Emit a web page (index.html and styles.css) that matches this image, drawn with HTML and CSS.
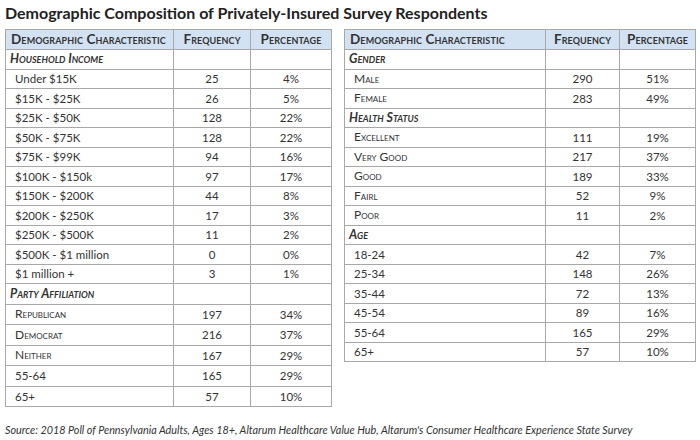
FILE: index.html
```html
<!DOCTYPE html>
<html lang="en">
<head>
<meta charset="UTF-8" />
<title>Demographic Composition of Privately-Insured Survey Respondents</title>
<link rel="stylesheet" href="styles.css">
</head>
<body>
  <h1>Demographic Composition of Privately-Insured Survey Respondents</h1>

  <div class="tables">
    <!-- Left: income and party -->
    <table class="demo left">
      <colgroup><col class="c1"><col class="c2"><col class="c3"></colgroup>
      <thead>
        <tr><th>Demographic Characteristic</th><th>Frequency</th><th>Percentage</th></tr>
      </thead>
      <tbody>
        <tr class="cat"><td>Household Income</td><td></td><td></td></tr>
        <tr><td>Under $15K</td><td>25</td><td>4%</td></tr>
        <tr><td>$15K - $25K</td><td>26</td><td>5%</td></tr>
        <tr><td>$25K - $50K</td><td>128</td><td>22%</td></tr>
        <tr><td>$50K - $75K</td><td>128</td><td>22%</td></tr>
        <tr><td>$75K - $99K</td><td>94</td><td>16%</td></tr>
        <tr><td>$100K - $150k</td><td>97</td><td>17%</td></tr>
        <tr><td>$150K - $200K</td><td>44</td><td>8%</td></tr>
        <tr><td>$200K - $250K</td><td>17</td><td>3%</td></tr>
        <tr><td>$250K - $500K</td><td>11</td><td>2%</td></tr>
        <tr><td>$500K - $1 million</td><td>0</td><td>0%</td></tr>
        <tr><td>$1 million +</td><td>3</td><td>1%</td></tr>
        <tr class="cat tall"><td>Party Affiliation</td><td></td><td></td></tr>
        <tr class="sc tall"><td>Republican</td><td>197</td><td>34%</td></tr>
        <tr class="sc tall"><td>Democrat</td><td>216</td><td>37%</td></tr>
        <tr class="sc tall"><td>Neither</td><td>167</td><td>29%</td></tr>
        <tr class="tall"><td>55-64</td><td>165</td><td>29%</td></tr>
        <tr class="tall"><td>65+</td><td>57</td><td>10%</td></tr>
      </tbody>
    </table>

    <!-- Right: gender, health, age -->
    <table class="demo right">
      <colgroup><col class="c1"><col class="c2"><col class="c3"></colgroup>
      <thead>
        <tr><th>Demographic Characteristic</th><th>Frequency</th><th>Percentage</th></tr>
      </thead>
      <tbody>
        <tr class="cat"><td>Gender</td><td></td><td></td></tr>
        <tr class="sc"><td>Male</td><td>290</td><td>51%</td></tr>
        <tr class="sc"><td>Female</td><td>283</td><td>49%</td></tr>
        <tr class="cat"><td>Health Status</td><td></td><td></td></tr>
        <tr class="sc"><td>Excellent</td><td>111</td><td>19%</td></tr>
        <tr class="sc"><td>Very Good</td><td>217</td><td>37%</td></tr>
        <tr class="sc"><td>Good</td><td>189</td><td>33%</td></tr>
        <tr class="sc"><td>Fairl</td><td>52</td><td>9%</td></tr>
        <tr class="sc"><td>Poor</td><td>11</td><td>2%</td></tr>
        <tr class="cat"><td>Age</td><td></td><td></td></tr>
        <tr><td>18-24</td><td>42</td><td>7%</td></tr>
        <tr><td>25-34</td><td>148</td><td>26%</td></tr>
        <tr><td>35-44</td><td>72</td><td>13%</td></tr>
        <tr><td>45-54</td><td>89</td><td>16%</td></tr>
        <tr><td>55-64</td><td>165</td><td>29%</td></tr>
        <tr><td>65+</td><td>57</td><td>10%</td></tr>
      </tbody>
    </table>
  </div>

  <p class="source">Source: 2018 Poll of Pennsylvania Adults, Ages 18+, Altarum Healthcare Value Hub, Altarum's Consumer Healthcare Experience State Survey</p>
</body>
</html>
```

FILE: styles.css
```css
body {
  font-family: Lato, 'Liberation Sans', sans-serif;
  background: #fff;
  color: #333;
  margin: 0;
  padding: 4px 5px 0 5px;
}

h1 {
  font-size: 16px;
  font-weight: 700;
  color: #222;
  margin: 0 0 7px 0;
  line-height: 18px;
}

.tables {
  display: flex;
  align-items: flex-start;
  gap: 12px;
}

/* Tables */
.demo {
  border-collapse: collapse;
  border: 1px solid #8f8f8f;
  font-size: 11.5px;
  table-layout: fixed;
  flex: none;
}
.demo th,
.demo td {
  border: 1px solid #a8a8a8;
  padding: 0 4px;
  height: 18.5px;
  text-align: center;
  line-height: 1;
  white-space: nowrap;
  overflow: hidden;
}
.demo th {
  height: 19px;
  background: #d3e2f3;
  font-variant: small-caps;
  font-weight: 700;
  font-size: 13.5px;
  color: #333;
  letter-spacing: 0.1px;
}
.demo th:first-child,
.demo td:first-child {
  text-align: left;
  padding-left: 9px;
}
.demo th:first-child {
  padding-left: 5px;
}

.left { width: 326px; }
.left .c1 { width: 168px; }
.left .c2 { width: 77px; }
.left .c3 { width: 81px; }

.right { width: 351px; }
.right .c1 { width: 201px; }
.right .c2 { width: 74px; }
.right .c3 { width: 76px; }

/* Category rows */
.cat td:first-child {
  font-weight: 700;
  font-style: italic;
  font-variant: small-caps;
  padding-left: 4px;
  font-size: 12.5px;
}
.sc td:first-child {
  font-variant: small-caps;
  font-size: 12px;
}
.tall td { height: 19.5px; }

.source {
  font-style: italic;
  font-size: 10.8px;
  color: #333;
  margin: 16px 0 0 0;
}
```
